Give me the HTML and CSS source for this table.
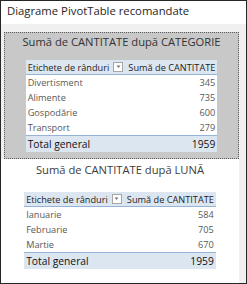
FILE: index.html
```html
<!DOCTYPE html>
<html>
<head>
<meta charset="utf-8">
<link rel="stylesheet" href="styles.css">
</head>
<body>
<div class="dialog">
  <div class="title">Diagrame PivotTable recomandate</div>
  <div class="main">
    <div class="list">
      <div class="item-wrap selected">
        <div class="item">
          <div class="item-title">Sumă de CANTITATE după CATEGORIE</div>
          <table class="pt">
            <tr class="hdr"><td class="lbl">Etichete de rânduri<span class="dd"><svg width="7" height="7" viewBox="0 0 7 7"><path d="M1.5 2.5h4l-2 2.5z" fill="#7a7a7a"/></svg></span></td><td class="val">Sumă de CANTITATE</td></tr>
            <tr><td class="lbl">Divertisment</td><td class="num">345</td></tr>
            <tr><td class="lbl">Alimente</td><td class="num">735</td></tr>
            <tr><td class="lbl">Gospodărie</td><td class="num">600</td></tr>
            <tr><td class="lbl">Transport</td><td class="num">279</td></tr>
            <tr class="tot"><td class="lbl">Total general</td><td class="num">1959</td></tr>
          </table>
        </div>
      </div>
      <div class="item-wrap">
        <div class="item">
          <div class="item-title">Sumă de CANTITATE după LUNĂ</div>
          <table class="pt">
            <tr class="hdr"><td class="lbl">Etichete de rânduri<span class="dd"><svg width="7" height="7" viewBox="0 0 7 7"><path d="M1.5 2.5h4l-2 2.5z" fill="#7a7a7a"/></svg></span></td><td class="val">Sumă de CANTITATE</td></tr>
            <tr><td class="lbl">Ianuarie</td><td class="num">584</td></tr>
            <tr><td class="lbl">Februarie</td><td class="num">705</td></tr>
            <tr><td class="lbl">Martie</td><td class="num">670</td></tr>
            <tr class="tot"><td class="lbl">Total general</td><td class="num">1959</td></tr>
          </table>
        </div>
      </div>
    </div>
    <div class="scroll"></div>
  </div>
</div>
</body>
</html>
```

FILE: styles.css
```css
html, body {
  margin: 0;
  padding: 0;
  background: #ffffff;
}
.dialog {
  width: 247px;
  height: 284px;
  box-sizing: border-box;
  border: 1px solid #262626;
  display: flex;
  flex-direction: column;
  font-family: "Open Sans", "Noto Sans", sans-serif;
  background: #ffffff;
}
.title {
  height: 23px;
  line-height: 20px;
  padding-left: 6px;
  font-size: 11.3px;
  color: #1e1e1e;
  background: #ffffff;
}
.main {
  flex: 1;
  display: flex;
  background: #f0f0f0;
}
.list {
  flex: 1;
  background: #ffffff;
}
.scroll {
  width: 7px;
  background: #f0f0f0;
}
.item-wrap.selected {
  background: #f0f0f0;
  padding: 8px 0 0 3px;
}
.item {
  padding: 1px 0 6px 0;
}
.selected .item {
  background: #c8c8c8;
  border: 1px dotted #5a5a5a;
}
.item-title {
  text-align: center;
  white-space: nowrap;
  font-size: 11.2px;
  color: #333333;
  height: 26px;
  line-height: 16px;
}
.item-wrap:not(.selected) .item-title {
  height: 32px;
  line-height: 20px;
  color: #3c3c3c;
}
.pt {
  margin: 0 auto;
  border-collapse: collapse;
  background: #ffffff;
  font-size: 9.2px;
  color: #595959;
}
.pt td {
  height: 15px;
  padding: 0 2px;
  white-space: nowrap;
}
.pt .num {
  text-align: right;
}
.pt .hdr td {
  background: #dce6f1;
  border-bottom: 1px solid #95b3d7;
  color: #1e1e1e;
  height: 14px;
}
.pt .hdr .val {
  text-align: left;
  padding-left: 3px;
}
.pt .tot td {
  background: #dce6f1;
  border-top: 1px solid #95b3d7;
  color: #111111;
  font-size: 10.3px;
  height: 16px;
}
.dd {
  display: inline-block;
  width: 8px;
  height: 8px;
  margin-left: 4px;
  border: 1px solid #a6a6a6;
  background: #ffffff;
  vertical-align: -1px;
}
.dd svg {
  display: block;
  margin: 0.5px;
}
```
